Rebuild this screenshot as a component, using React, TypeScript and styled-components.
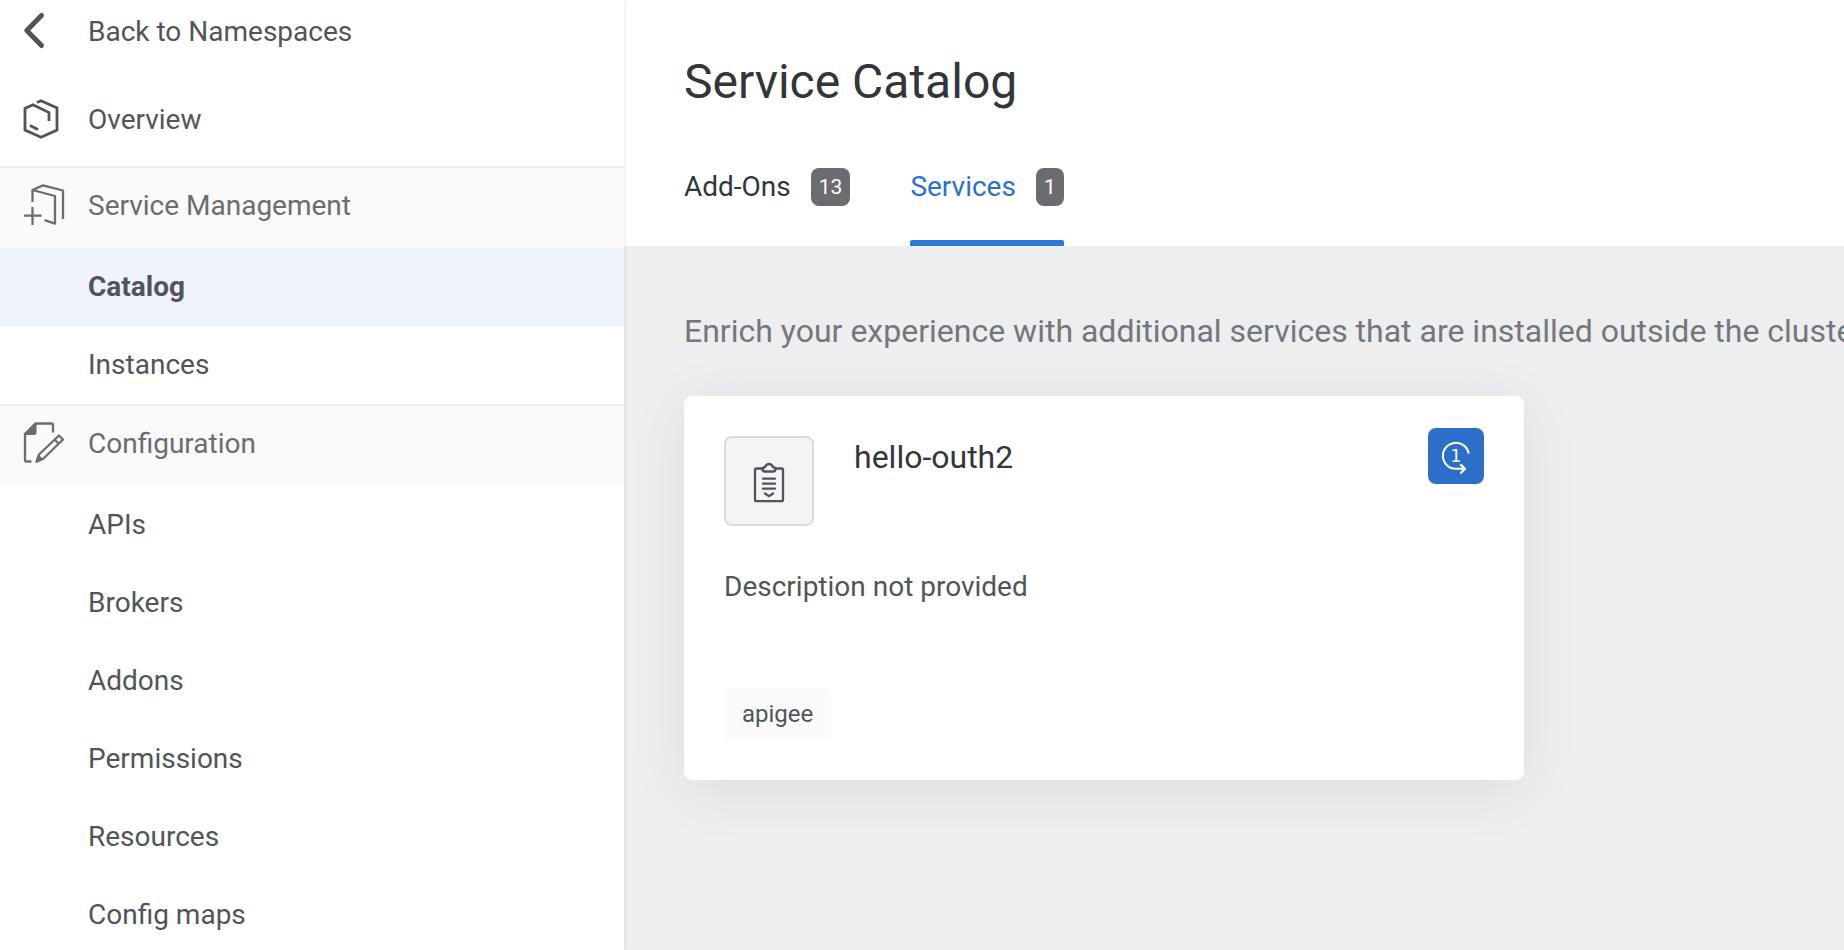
import React, { useState } from 'react';
import styled, { createGlobalStyle } from 'styled-components';

const color = {
  text: '#32363a',
  nav: '#51555a',
  muted: '#6a6d70',
  hint: '#74777a',
  accent: '#2b70cf',
  page: '#edeef0',
  soft: '#fafafa',
  line: '#ededee',
};

const GlobalStyle = createGlobalStyle`
  *, *::before, *::after { box-sizing: border-box; }
  body {
    margin: 0;
    background: ${color.page};
    color: ${color.text};
    font-family: Roboto, "Liberation Sans", sans-serif;
    font-size: 28px;
    line-height: 40px;
  }
`;

const Shell = styled.div`
  display: flex;
  height: 100vh;
  overflow: hidden;
`;

const Sidebar = styled.nav`
  position: relative;
  z-index: 1;
  flex: 0 0 624px;
  background: #fff;
  box-shadow: 0 0 4px rgba(0, 0, 0, 0.12);
  overflow-y: auto;
  scrollbar-width: none;
`;

const TopLink = styled.a<{ $height: number }>`
  display: flex;
  align-items: center;
  gap: 24px;
  height: ${(p) => p.$height}px;
  padding: 0 24px;
  color: ${color.nav};
  text-decoration: none;
`;

const TopLinks = styled.div`
  display: flex;
  flex-direction: column;
  gap: 10px;
`;

const Group = styled.section`
  border-top: 2px solid ${color.line};
`;

const GroupTitle = styled.h2`
  display: flex;
  align-items: center;
  gap: 24px;
  height: 80px;
  margin: 0;
  padding: 0 24px 4px;
  background: ${color.soft};
  color: ${color.muted};
  font-size: 28px;
  font-weight: 400;
`;

const GroupList = styled.ul`
  margin: 0;
  padding: 0;
  list-style: none;
`;

const GroupLink = styled.a<{ $active: boolean }>`
  display: flex;
  align-items: center;
  height: 78px;
  padding: 0 24px 0 88px;
  background: ${(p) => (p.$active ? '#eff4fc' : 'transparent')};
  color: ${color.nav};
  font-weight: ${(p) => (p.$active ? 700 : 400)};
  text-decoration: none;
`;

const Icon = styled.svg`
  flex: none;
  width: 40px;
  height: 40px;
  overflow: visible;
  fill: none;
  stroke: currentColor;
  stroke-width: 2.3;
`;

const Main = styled.main`
  flex: 1;
  min-width: 0;
  overflow: hidden;
`;

const Header = styled.header`
  padding: 54px 60px 0;
  background: #fff;
`;

const Title = styled.h1`
  margin: 0 0 18px;
  font-size: 48px;
  font-weight: 400;
  line-height: 56px;
`;

const Tabs = styled.div`
  display: flex;
  gap: 60px;
`;

const Tab = styled.button<{ $active: boolean }>`
  position: relative;
  display: flex;
  align-items: center;
  gap: 20px;
  height: 118px;
  padding: 0;
  border: 0;
  background: none;
  color: ${(p) => (p.$active ? color.accent : color.text)};
  font: inherit;
  cursor: pointer;

  &::after {
    content: '';
    position: absolute;
    inset: auto 0 0;
    height: 6px;
    border-radius: 2px 2px 0 0;
    background: ${(p) => (p.$active ? '#2e77d9' : 'transparent')};
  }
`;

const Counter = styled.span`
  padding: 0 8px;
  border-radius: 8px;
  background: #6b6c70;
  color: #fff;
  font-size: 21px;
  line-height: 38px;
`;

const Content = styled.div`
  padding: 65px 60px;
`;

const Intro = styled.p`
  margin: 0 0 45px;
  color: ${color.hint};
  font-size: 32px;
  white-space: nowrap;
`;

const Card = styled.article`
  display: flex;
  flex-direction: column;
  align-items: flex-start;
  width: 840px;
  max-width: 100%;
  min-height: 384px;
  padding: 32px 40px 40px;
  border-radius: 8px;
  background: #fff;
  box-shadow: 0 10px 60px rgba(50, 54, 58, 0.08);
`;

const CardHeader = styled.div`
  display: flex;
  align-items: flex-start;
  align-self: stretch;
  justify-content: space-between;
  gap: 40px;
`;

const Identity = styled.div`
  display: flex;
  gap: 40px;
  padding-top: 8px;
`;

const Tile = styled.div`
  display: grid;
  place-items: center;
  width: 90px;
  height: 90px;
  border: 2px solid #d9dbdd;
  border-radius: 8px;
  background: #f3f4f6;
  color: ${color.nav};
`;

const CardTitle = styled.h3`
  margin: 0;
  font-size: 32px;
  font-weight: 400;
  line-height: 42px;
`;

const ProvisionBadge = styled.div`
  display: grid;
  place-items: center;
  width: 56px;
  height: 56px;
  border-radius: 8px;
  background: #2c6fc9;
  color: #fff;
`;

const BadgeDigit = styled.text`
  fill: currentColor;
  stroke: none;
  font: 17px "DejaVu Sans", sans-serif;
  text-anchor: middle;
`;

const CardText = styled.p`
  margin: 40px 0;
  color: ${color.nav};
  line-height: 42px;
`;

const Tag = styled.span`
  margin-top: auto;
  padding: 0 18px;
  border-radius: 8px;
  background: ${color.soft};
  color: ${color.nav};
  font-size: 24px;
  line-height: 52px;
`;

const BackIcon = () => (
  <Icon viewBox="0 0 40 40" aria-hidden="true">
    <path d="M17.5 3.5 2.8 18.5l14.7 15" strokeWidth="5" strokeLinecap="round" strokeLinejoin="round" />
  </Icon>
);

const OverviewIcon = () => (
  <Icon viewBox="0 0 40 40" aria-hidden="true">
    <path
      d="M13 2.5 17 .7 33 8V30L17 37.2 1 30V8.5L9 4.7 25 12.5V21M6 25.5l8 4"
      strokeWidth="2.8"
    />
  </Icon>
);

const ServicesIcon = () => (
  <Icon viewBox="0 0 40 40" aria-hidden="true">
    <path
      d="M8.5 16V4L19-.6 39 4.5V33M8.5 4 31 10V37.7L20.5 34.2M0 29.7H17.5M8.5 21V39"
      strokeLinejoin="round"
    />
  </Icon>
);

const ConfigIcon = () => (
  <Icon viewBox="0 0 40 40" aria-hidden="true">
    <path d="M29 8.5V1Q29-.5 27.5-.5H11.5L1 10V36Q1 37.5 2.5 37.5H7.5" />
    <path d="M11.5-.5H12.5V8.5Q12.5 11 10 11H1V10Z" fill="currentColor" stroke="none" />
    <path d="M12.5 37.7 15 30.5 35 11.5 39 15.5 19 35Z" strokeLinejoin="round" />
    <path d="M30.5 15.5 34.5 19.5" />
    <path d="M12 38.5 14.5 30.5 19.5 35.5Z" fill="currentColor" stroke="none" />
  </Icon>
);

const ClipboardIcon = () => (
  <Icon viewBox="0 0 40 40" aria-hidden="true">
    <path d="M14 7.5H7.5Q6 7.5 6 9V38.7Q6 40.2 7.5 40.2H32.5Q34 40.2 34 38.7V9Q34 7.5 32.5 7.5H26" />
    <path d="M13.5 8Q13.5 10.5 16 10.5H24Q26.5 10.5 26.5 8 26.2 6.4 24 6 22.6 3 20 3T16 6Q13.8 6.4 13.5 8Z" />
    <path d="M14 17.7H26M14 22.7H26M14 27.7H26M16 32.5 20 35.2 24 32.5" strokeLinecap="round" />
  </Icon>
);

const ProvisionIcon = () => (
  <Icon viewBox="0 0 40 40" role="img" aria-label="Provision only once">
    <path d="M32.7 17.5A13 13 0 1 0 19.8 32.8H29" strokeWidth="2" />
    <path d="M25 29 29 32.8 25 36.7" strokeLinecap="round" strokeLinejoin="round" />
    <BadgeDigit x="20" y="25.5">1</BadgeDigit>
  </Icon>
);

const groups = [
  { title: 'Service Management', icon: <ServicesIcon />, items: ['Catalog', 'Instances'] },
  {
    title: 'Configuration',
    icon: <ConfigIcon />,
    items: ['APIs', 'Brokers', 'Addons', 'Permissions', 'Resources', 'Config maps'],
  },
];

const tabs = [
  { label: 'Add-Ons', count: 13 },
  { label: 'Services', count: 1 },
];

export default function App() {
  const [page, setPage] = useState('Catalog');
  const [tab, setTab] = useState('Services');

  return (
    <>
      <GlobalStyle />
      <Shell>
        <Sidebar aria-label="Namespace">
          <TopLinks>
            <TopLink href="#namespaces" $height={64}>
              <BackIcon />
              Back to Namespaces
            </TopLink>
            <TopLink href="#overview" $height={92}>
              <OverviewIcon />
              Overview
            </TopLink>
          </TopLinks>
          {groups.map((group) => (
            <Group key={group.title}>
              <GroupTitle>
                {group.icon}
                {group.title}
              </GroupTitle>
              <GroupList>
                {group.items.map((item) => (
                  <li key={item}>
                    <GroupLink
                      href={`#${item.toLowerCase().replace(' ', '-')}`}
                      $active={item === page}
                      aria-current={item === page ? 'page' : undefined}
                      onClick={() => setPage(item)}
                    >
                      {item}
                    </GroupLink>
                  </li>
                ))}
              </GroupList>
            </Group>
          ))}
        </Sidebar>
        <Main>
          <Header>
            <Title>Service Catalog</Title>
            <Tabs role="tablist">
              {tabs.map(({ label, count }) => (
                <Tab
                  key={label}
                  type="button"
                  role="tab"
                  aria-selected={label === tab}
                  $active={label === tab}
                  onClick={() => setTab(label)}
                >
                  {label}
                  <Counter>{count}</Counter>
                </Tab>
              ))}
            </Tabs>
          </Header>
          <Content>
            <Intro>
              Enrich your experience with additional services that are installed outside the cluster.
            </Intro>
            <Card>
              <CardHeader>
                <Identity>
                  <Tile>
                    <ClipboardIcon />
                  </Tile>
                  <CardTitle>hello-outh2</CardTitle>
                </Identity>
                <ProvisionBadge>
                  <ProvisionIcon />
                </ProvisionBadge>
              </CardHeader>
              <CardText>Description not provided</CardText>
              <Tag>apigee</Tag>
            </Card>
          </Content>
        </Main>
      </Shell>
    </>
  );
}
